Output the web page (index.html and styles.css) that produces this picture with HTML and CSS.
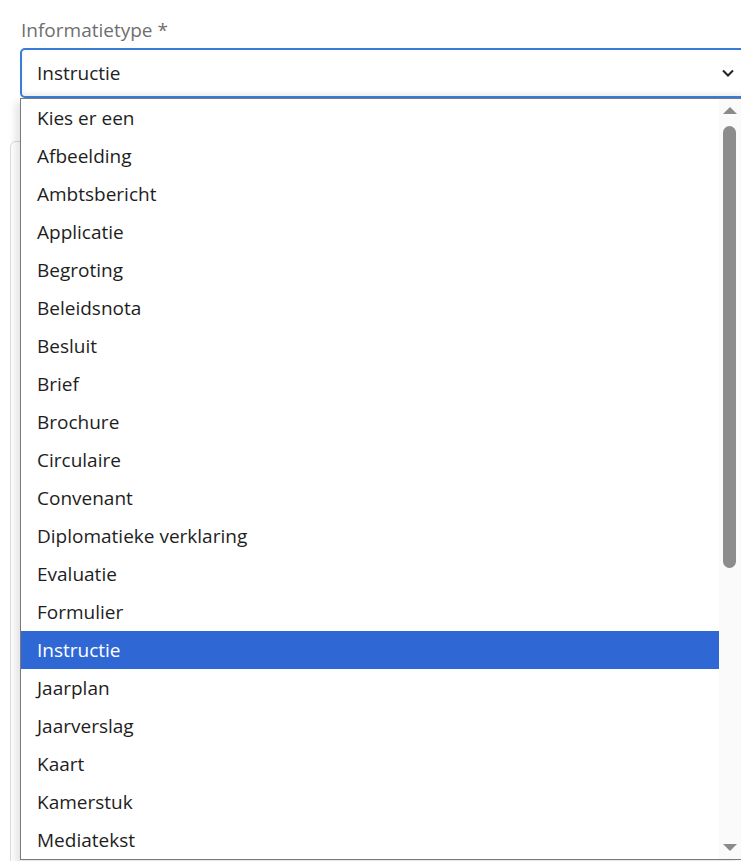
FILE: index.html
```html
<!DOCTYPE html>
<html lang="nl">
<head>
<meta charset="utf-8">
<link rel="stylesheet" href="styles.css">
</head>
<body>
<div class="page">
  <div class="card-behind"></div>
  <div class="field">
    <label class="label">Informatietype *</label>
    <div class="select">
      <span class="value">Instructie</span>
      <svg class="chev" width="14" height="10" viewBox="0 0 14 10"><path d="M2 2.5 L7 7.5 L12 2.5" fill="none" stroke="#222" stroke-width="2"/></svg>
    </div>
    <div class="listbox">
      <ul class="options">
        <li>Kies er een</li>
        <li>Afbeelding</li>
        <li>Ambtsbericht</li>
        <li>Applicatie</li>
        <li>Begroting</li>
        <li>Beleidsnota</li>
        <li>Besluit</li>
        <li>Brief</li>
        <li>Brochure</li>
        <li>Circulaire</li>
        <li>Convenant</li>
        <li>Diplomatieke verklaring</li>
        <li>Evaluatie</li>
        <li>Formulier</li>
        <li class="selected">Instructie</li>
        <li>Jaarplan</li>
        <li>Jaarverslag</li>
        <li>Kaart</li>
        <li>Kamerstuk</li>
        <li>Mediatekst</li>
      </ul>
      <div class="scrollbar">
        <span class="arrow up"></span>
        <div class="track"><div class="thumb"></div></div>
        <span class="arrow down"></span>
      </div>
    </div>
  </div>
</div>
</body>
</html>
```

FILE: styles.css
```css
html, body {
  margin: 0;
  padding: 0;
  background: #fff;
  overflow: hidden;
}
body {
  font-family: "Open Sans", "Noto Sans", sans-serif;
  width: 741px;
  height: 861px;
}
.page {
  position: relative;
  width: 741px;
  height: 861px;
}
.card-behind {
  position: absolute;
  left: 10px;
  top: 141px;
  width: 760px;
  height: 760px;
  border: 1px solid #dcdcdc;
  border-radius: 6px;
}
.field {
  position: relative;
  padding: 15px 0 0 20px;
}
.label {
  display: block;
  color: #6f6f6f;
  font-size: 19px;
  line-height: 30px;
  padding-left: 1px;
  margin-bottom: 3px;
}
.select {
  box-sizing: border-box;
  width: 740px;
  height: 50px;
  border: 2px solid #3a7bd5;
  border-radius: 5px;
  display: flex;
  align-items: center;
  padding-left: 15px;
  box-shadow: inset 0 -3px 4px rgba(0,0,0,0.06);
}
.value {
  font-size: 19px;
  color: #222;
  flex: 1;
}
.chev {
  margin-right: 23px;
}
.listbox {
  position: absolute;
  left: 20px;
  top: 98px;
  box-sizing: border-box;
  width: 721px;
  height: 762px;
  border: 1px solid #7a7a7a;
  border-right: none;
  background: #fff;
  display: flex;
  box-shadow: -4px 4px 8px rgba(0,0,0,0.12);
}
.options {
  list-style: none;
  margin: 0;
  padding: 0;
  flex: 1;
}
.options li {
  height: 38px;
  line-height: 38px;
  padding-left: 16px;
  font-size: 19px;
  color: #1e1e1e;
  white-space: nowrap;
}
.options li.selected {
  background: #2f68d4;
  color: #fff;
}
.scrollbar {
  width: 22px;
  background: #fafafa;
  display: flex;
  flex-direction: column;
  align-items: center;
}
.arrow {
  width: 0;
  height: 0;
  border-left: 7px solid transparent;
  border-right: 7px solid transparent;
}
.arrow.up {
  border-bottom: 7px solid #8a8a8a;
  margin-top: 8px;
}
.arrow.down {
  border-top: 7px solid #8a8a8a;
  margin-bottom: 8px;
}
.track {
  flex: 1;
  width: 100%;
  display: flex;
  justify-content: center;
  padding-top: 12px;
}
.thumb {
  width: 13px;
  height: 442px;
  border-radius: 7px;
  background: #8c8c8c;
  margin-left: -2px;
}
```
